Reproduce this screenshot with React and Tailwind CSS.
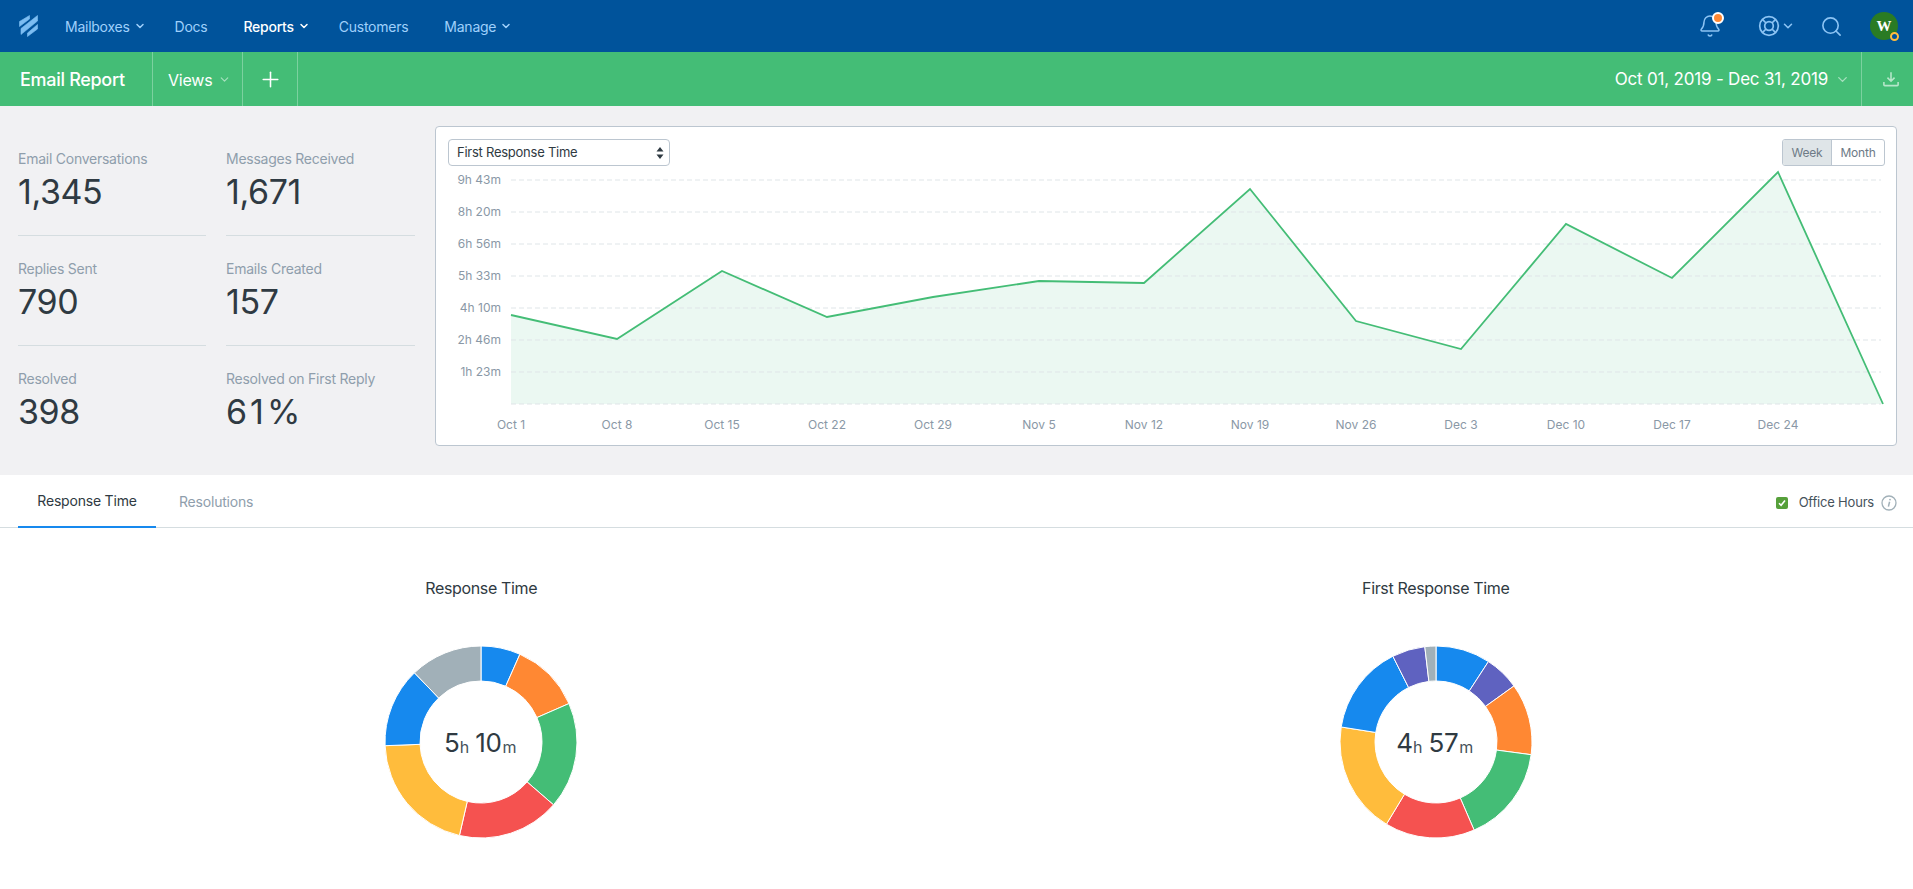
import { Bell, Search, Plus, ChevronDown } from "lucide-react";

const navItems = [
  { label: "Mailboxes", menu: true },
  { label: "Docs" },
  { label: "Reports", menu: true, active: true },
  { label: "Customers" },
  { label: "Manage", menu: true },
];

const stats = [
  ["Email Conversations", "1,345"],
  ["Messages Received", "1,671"],
  ["Replies Sent", "790"],
  ["Emails Created", "157"],
  ["Resolved", "398"],
  ["Resolved on First Reply", "61%"],
];

const yLabels = ["9h 43m", "8h 20m", "6h 56m", "5h 33m", "4h 10m", "2h 46m", "1h 23m"];
const xLabels = ["Oct 1", "Oct 8", "Oct 15", "Oct 22", "Oct 29", "Nov 5", "Nov 12", "Nov 19", "Nov 26", "Dec 3", "Dec 10", "Dec 17", "Dec 24"];

// page coordinates minus the svg origin (436, 167)
const points = [
  [75, 148], [181, 172], [286, 104], [391, 150], [497, 130], [603, 114], [708, 116],
  [814, 22], [920, 154], [1025, 182], [1130, 57], [1236, 111], [1342, 5], [1447, 237],
];

const blue = "#1689ee";
const orange = "#ff8833";
const green = "#44bd76";
const red = "#f55250";
const yellow = "#ffbc3c";
const gray = "#a1b0b8";
const purple = "#5f62c0";

const donutOne = [
  [23.9, blue], [66.4, orange], [130.9, green], [193, red], [267.8, yellow], [316.1, blue], [360, gray],
];
const donutTwo = [
  [33.1, blue], [54.3, purple], [97.6, orange], [156.6, green], [211.1, red], [279, yellow], [333.3, blue], [353.3, purple], [360, gray],
];

const polar = (r, deg) => {
  const a = ((deg - 90) * Math.PI) / 180;
  return `${(100 + r * Math.cos(a)).toFixed(2)} ${(100 + r * Math.sin(a)).toFixed(2)}`;
};

const slicePath = (start, end, outer, inner) => {
  const large = end - start > 180 ? 1 : 0;
  return `M${polar(outer, start)} A${outer} ${outer} 0 ${large} 1 ${polar(outer, end)} L${polar(inner, end)} A${inner} ${inner} 0 ${large} 0 ${polar(inner, start)} Z`;
};

const Logo = () => (
  <svg width="19" height="22" viewBox="0 0 19 22" fill="#7cbdf2" stroke="#7cbdf2" strokeWidth="0.6" strokeLinejoin="round">
    <path d="M0.5 6.5 L10.5 0.5 V4 L0.5 11.5 Z" />
    <path d="M2 13.5 L18.5 0.5 V6 L2 19.5 Z" />
    <path d="M8.5 18 L18.5 9.5 V14 L8.5 21.5 Z" />
  </svg>
);

const Lifebuoy = () => (
  <svg width="22" height="22" viewBox="0 0 22 22" fill="none" stroke="#8cc4f4" strokeWidth="1.7">
    <circle cx="11" cy="11" r="9.3" />
    <circle cx="11" cy="11" r="4.3" />
    <path d="M4.4 4.4 L8 8 M17.6 4.4 L14 8 M4.4 17.6 L8 14 M17.6 17.6 L14 14" />
  </svg>
);

const Stat = ({ label, value, last }) => (
  <div className={`h-[110px] pt-[23px] ${last ? "" : "border-b border-[#d5dde0]"}`}>
    <div className="text-[14px] leading-5 text-[#8f9eac] tracking-[-0.25px]">{label}</div>
    <div className={`text-[34px] leading-[46px] text-[#2f3a42] ${value.endsWith("%") ? "tracking-[3px]" : "tracking-[-0.4px]"}`}>
      {value}
    </div>
  </div>
);

const Chart = () => {
  const line = points.map((p) => p.join(",")).join(" ");
  const area = `75,237 ${line}`;
  return (
    <svg width="1460" height="277" viewBox="0 0 1460 277" className="block mt-px" style={{ fontFamily: "Inter, sans-serif" }}>
      <polygon points={area} fill="#ebf8f2" />
      {[13, 45, 77, 109, 141, 173, 205, 237].map((y) => (
        <line key={y} x1="75" x2="1445" y1={y} y2={y} stroke="#dfe5e8" strokeDasharray="5 3" />
      ))}
      <polyline points={line} fill="none" stroke={green} strokeWidth="1.8" />
      {yLabels.map((t, i) => (
        <text key={t} x="65" y={17 + i * 32} textAnchor="end" fontSize="12" fill="#8a98a6">{t}</text>
      ))}
      {xLabels.map((t, i) => (
        <text key={t} x={points[i][0]} y="262" textAnchor="middle" fontSize="12" fill="#8a98a6">{t}</text>
      ))}
    </svg>
  );
};

const Donut = ({ title, slices, hours, minutes }) => (
  <div className="flex flex-col items-center">
    <div className="mt-12 text-[16px] leading-6 text-[#2f3a42] tracking-[-0.35px]">{title}</div>
    <div className="relative mt-[42px] w-[200px] h-[200px]">
      <svg width="200" height="200" viewBox="0 0 200 200" className="block">
        {slices.map(([end, color], i) => (
          <path
            key={i}
            d={slicePath(i === 0 ? 0 : slices[i - 1][0], end, 96, 61)}
            fill={color}
            stroke="#fff"
            strokeWidth="1"
          />
        ))}
      </svg>
      <div className="absolute inset-0 pt-[2px] pr-[2px] flex items-center justify-center text-[#2f3a42]">
        <span className="text-[26px] leading-none">{hours}</span>
        <span className="text-[16px] leading-none mt-[7px] mr-[6px] text-[#46525b]">h</span>
        <span className="text-[26px] leading-none tracking-[-0.4px]">{minutes}</span>
        <span className="text-[16px] leading-none mt-[7px] ml-[1px] text-[#46525b]">m</span>
      </div>
    </div>
  </div>
);

export default function App() {
  return (
    <div className="min-h-[889px] bg-white [font-family:Inter,sans-serif]">
      <header className="h-[52px] bg-[#00539b] flex items-center pl-[19px] pr-[15px]">
        <Logo />
        <nav className="flex items-center ml-[27px] text-[14px] tracking-[-0.25px] text-[#9fd0fb]">
          {navItems.map((item) => (
            <div
              key={item.label}
              className={`flex items-center gap-[4px] ${item.menu ? "mr-[29px]" : "mr-[36px]"} ${item.active ? "text-white font-medium" : ""}`}
            >
              {item.label}
              {item.menu && <ChevronDown size={12} strokeWidth={3} />}
            </div>
          ))}
        </nav>
        <div className="ml-auto flex items-center text-[#8cc4f4]">
          <div className="relative">
            <Bell size={24} strokeWidth={1.5} />
            <span className="absolute -top-[2px] -right-[2px] w-3 h-3 rounded-full bg-[#ff8833] border-2 border-white" />
          </div>
          <div className="flex items-center gap-px ml-9">
            <Lifebuoy />
            <ChevronDown size={14} strokeWidth={2.6} />
          </div>
          <Search size={23} strokeWidth={1.7} className="ml-[25px]" />
          <div className="relative ml-[27px] w-7 h-7 rounded-full bg-[#2a7b24] flex items-center justify-center text-white text-[15px] font-bold [font-family:'Liberation_Serif',serif]">
            W
            <span className="absolute -bottom-[1px] -right-[1px] w-[9px] h-[9px] rounded-full bg-[#00539b] border-2 border-[#ffbc3c]" />
          </div>
        </div>
      </header>

      <div className="h-[54px] bg-[#44bd76] flex items-stretch text-white">
        <div className="w-[153px] pl-5 flex items-center border-r border-[#7cd19f] text-[18px] font-medium tracking-[-0.3px]">
          Email Report
        </div>
        <div className="w-[90px] pl-[15px] pt-px flex items-center gap-[5px] border-r border-[#7cd19f] text-[16px] tracking-[-0.2px]">
          Views
          <ChevronDown size={13} strokeWidth={2.2} className="text-[#a5e0bd]" />
        </div>
        <div className="w-[55px] flex items-center justify-center border-r border-[#7cd19f]">
          <Plus size={25} strokeWidth={1.5} />
        </div>
        <div className="ml-auto pt-px flex items-center pr-[11px] text-[17px] tracking-[-0.2px]">
          Oct 01, 2019 - Dec 31, 2019
          <ChevronDown size={15} strokeWidth={2.2} className="ml-[7px] text-[#a5e0bd]" />
        </div>
        <div className="w-[52px] pl-[6px] flex items-center justify-center border-l border-[#7cd19f] text-[#b5e6c9]">
          <svg width="16" height="16" viewBox="0 0 18 18" fill="none" stroke="currentColor" strokeWidth="1.8">
            <path d="M9 1.5 V11 M5 7.5 L9 11.5 L13 7.5 M1 12.5 V15.5 Q1 16.5 2 16.5 H16 Q17 16.5 17 15.5 V12.5" />
          </svg>
        </div>
      </div>

      <section className="h-[369px] bg-[#f1f1f3] flex pl-[18px] pr-4 pt-5">
        <div className="w-[397px] grid grid-cols-[188px_189px] gap-x-5 content-start">
          {stats.map(([label, value], i) => (
            <Stat key={label} label={label} value={value} last={i > 3} />
          ))}
        </div>
        <div className="ml-5 flex-1 h-[320px] bg-white border border-[#bcc6d0] rounded-[4px]">
          <div className="flex justify-between pt-3 pl-3 pr-[11px]">
            <div className="relative">
              <select className="appearance-none w-[222px] h-[27px] pl-2 bg-white border border-[#bcc6d0] rounded-[4px] text-[13px] text-[#2f3a42] tracking-[-0.25px]">
                <option>First Response Time</option>
              </select>
              <svg width="8" height="12" viewBox="0 0 8 12" className="absolute right-[6px] top-[8px]" fill="#2f3a42">
                <path d="M4 0 L7.5 4.6 H0.5 Z M4 12 L0.5 7.4 H7.5 Z" />
              </svg>
            </div>
            <div className="flex h-[27px] border border-[#bcc6d0] rounded-[3px] text-[12px] tracking-[-0.2px] text-[#6d7a86] overflow-hidden">
              <div className="w-[49px] flex items-center justify-center bg-[#dfe5e8] border-r border-[#bcc6d0]">Week</div>
              <div className="w-[52px] flex items-center justify-center">Month</div>
            </div>
          </div>
          <Chart />
        </div>
      </section>

      <div className="h-[53px] border-b border-[#d5dde0] flex items-stretch pl-[18px] pr-4">
        <div className="w-[138px] flex items-center justify-center border-b-2 border-[#1689ee] -mb-px text-[14px] text-[#2f3a42] tracking-[-0.2px]">
          Response Time
        </div>
        <div className="ml-[3px] px-5 flex items-center text-[14px] text-[#8f9eac] tracking-[-0.2px]">
          Resolutions
        </div>
        <div className="ml-auto pt-[3px] flex items-center">
          <span className="w-3 h-3 rounded-[2px] bg-[#56a03a] flex items-center justify-center">
            <svg width="8" height="8" viewBox="0 0 8 8" fill="none" stroke="#fff" strokeWidth="1.6">
              <path d="M1 4.2 L3.1 6.3 L7 1.5" />
            </svg>
          </span>
          <span className="ml-[11px] text-[13px] text-[#46525b] tracking-[-0.2px]">Office Hours</span>
          <svg width="16" height="16" viewBox="0 0 16 16" fill="none" stroke="#a1b0b8" className="ml-[7px]">
            <circle cx="8" cy="8" r="7" strokeWidth="1.3" />
            <path d="M8.6 6.8 L7.4 11.6" strokeWidth="1.5" />
            <circle cx="9" cy="4.6" r="0.9" fill="#a1b0b8" stroke="none" />
          </svg>
        </div>
      </div>

      <div className="grid grid-cols-2 pl-1">
        <Donut title="Response Time" slices={donutOne} hours="5" minutes="10" />
        <Donut title="First Response Time" slices={donutTwo} hours="4" minutes="57" />
      </div>
    </div>
  );
}
